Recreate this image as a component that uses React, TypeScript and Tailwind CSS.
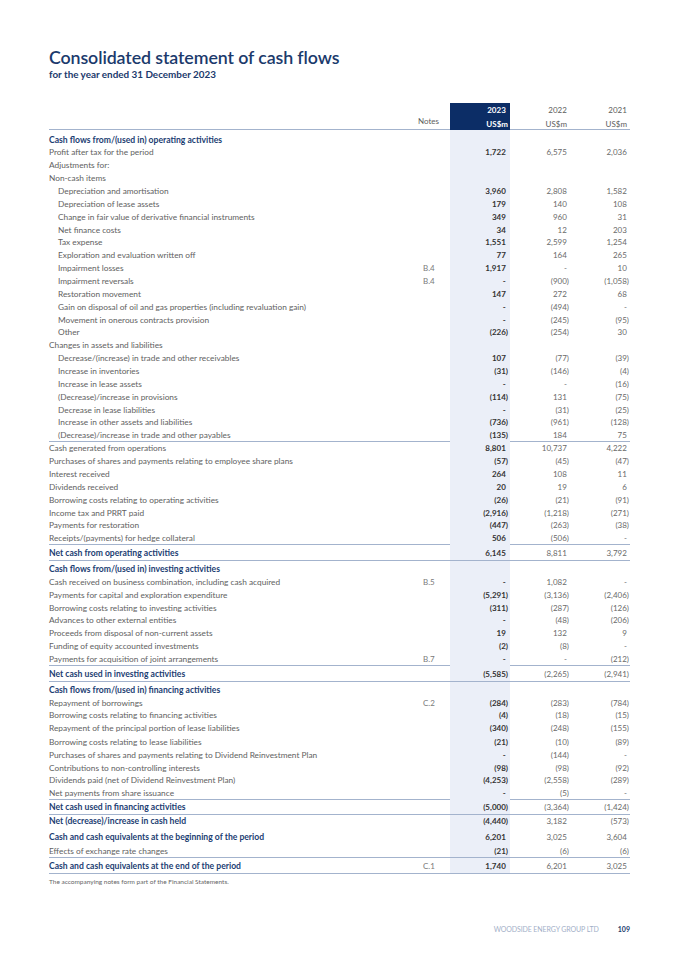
import React from 'react';

type Row = {
  label: string;
  kind?: 'head' | 'item' | 'total';
  indent?: boolean;
  note?: string;
  v?: [string, string, string];
  line?: boolean;
  h?: string;
};

const rows: Row[] = [
  { label: 'Cash flows from/(used in) operating activities', kind: 'head', h: 'h-[16.44px]' },
  { label: 'Profit after tax for the period', v: ['1,722', '6,575', '2,036'] },
  { label: 'Adjustments for:' },
  { label: 'Non-cash items' },
  { label: 'Depreciation and amortisation', indent: true, v: ['3,960', '2,808', '1,582'] },
  { label: 'Depreciation of lease assets', indent: true, v: ['179', '140', '108'] },
  { label: 'Change in fair value of derivative financial instruments', indent: true, v: ['349', '960', '31'] },
  { label: 'Net finance costs', indent: true, v: ['34', '12', '203'] },
  { label: 'Tax expense', indent: true, v: ['1,551', '2,599', '1,254'] },
  { label: 'Exploration and evaluation written off', indent: true, v: ['77', '164', '265'] },
  { label: 'Impairment losses', indent: true, note: 'B.4', v: ['1,917', '-', '10'] },
  { label: 'Impairment reversals', indent: true, note: 'B.4', v: ['-', '(900)', '(1,058)'] },
  { label: 'Restoration movement', indent: true, v: ['147', '272', '68'] },
  { label: 'Gain on disposal of oil and gas properties (including revaluation gain)', indent: true, v: ['-', '(494)', '-'] },
  { label: 'Movement in onerous contracts provision', indent: true, v: ['-', '(245)', '(95)'] },
  { label: 'Other', indent: true, v: ['(226)', '(254)', '30'] },
  { label: 'Changes in assets and liabilities' },
  { label: 'Decrease/(increase) in trade and other receivables', indent: true, v: ['107', '(77)', '(39)'] },
  { label: 'Increase in inventories', indent: true, v: ['(31)', '(146)', '(4)'] },
  { label: 'Increase in lease assets', indent: true, v: ['-', '-', '(16)'] },
  { label: '(Decrease)/increase in provisions', indent: true, v: ['(114)', '131', '(75)'] },
  { label: 'Decrease in lease liabilities', indent: true, v: ['-', '(31)', '(25)'] },
  { label: 'Increase in other assets and liabilities', indent: true, v: ['(736)', '(961)', '(128)'] },
  { label: '(Decrease)/increase in trade and other payables', indent: true, v: ['(135)', '184', '75'], line: true },
  { label: 'Cash generated from operations', v: ['8,801', '10,737', '4,222'] },
  { label: 'Purchases of shares and payments relating to employee share plans', v: ['(57)', '(45)', '(47)'] },
  { label: 'Interest received', v: ['264', '108', '11'] },
  { label: 'Dividends received', v: ['20', '19', '6'] },
  { label: 'Borrowing costs relating to operating activities', v: ['(26)', '(21)', '(91)'] },
  { label: 'Income tax and PRRT paid', v: ['(2,916)', '(1,218)', '(271)'] },
  { label: 'Payments for restoration', v: ['(447)', '(263)', '(38)'] },
  { label: 'Receipts/(payments) for hedge collateral', v: ['506', '(506)', '-'], line: true },
  { label: 'Net cash from operating activities', kind: 'total', v: ['6,145', '8,811', '3,792'], line: true, h: 'h-[15.87px]' },
  { label: 'Cash flows from/(used in) investing activities', kind: 'head', h: 'h-[14.87px]' },
  { label: 'Cash received on business combination, including cash acquired', note: 'B.5', v: ['-', '1,082', '-'] },
  { label: 'Payments for capital and exploration expenditure', v: ['(5,291)', '(3,136)', '(2,406)'] },
  { label: 'Borrowing costs relating to investing activities', v: ['(311)', '(287)', '(126)'] },
  { label: 'Advances to other external entities', v: ['-', '(48)', '(206)'] },
  { label: 'Proceeds from disposal of non-current assets', v: ['19', '132', '9'] },
  { label: 'Funding of equity accounted investments', v: ['(2)', '(8)', '-'] },
  { label: 'Payments for acquisition of joint arrangements', note: 'B.7', v: ['-', '-', '(212)'], line: true },
  { label: 'Net cash used in investing activities', kind: 'total', v: ['(5,585)', '(2,265)', '(2,941)'], line: true, h: 'h-[15.87px]' },
  { label: 'Cash flows from/(used in) financing activities', kind: 'head', h: 'h-[14.87px]' },
  { label: 'Repayment of borrowings', note: 'C.2', v: ['(284)', '(283)', '(784)'] },
  { label: 'Borrowing costs relating to financing activities', v: ['(4)', '(18)', '(15)'] },
  { label: 'Repayment of the principal portion of lease liabilities', v: ['(340)', '(248)', '(155)'] },
  { label: 'Borrowing costs relating to lease liabilities', v: ['(21)', '(10)', '(89)'], h: 'h-[13.87px]' },
  { label: 'Purchases of shares and payments relating to Dividend Reinvestment Plan', v: ['-', '(144)', '-'], h: 'h-[12.75px]' },
  { label: 'Contributions to non-controlling interests', v: ['(98)', '(98)', '(92)'], h: 'h-[12.75px]' },
  { label: 'Dividends paid (net of Dividend Reinvestment Plan)', v: ['(4,253)', '(2,558)', '(289)'], h: 'h-[12.75px]' },
  { label: 'Net payments from share issuance', v: ['-', '(5)', '-'], line: true, h: 'h-[12.75px]' },
  { label: 'Net cash used in financing activities', kind: 'total', v: ['(5,000)', '(3,364)', '(1,424)'], line: true, h: 'h-[14.87px]' },
  { label: 'Net (decrease)/increase in cash held', kind: 'total', v: ['(4,440)', '3,182', '(573)'] },
  { label: 'Cash and cash equivalents at the beginning of the period', kind: 'total', v: ['6,201', '3,025', '3,604'], h: 'h-[15.87px]' },
  { label: 'Effects of exchange rate changes', v: ['(21)', '(6)', '(6)'], line: true, h: 'h-[14.87px]' },
  { label: 'Cash and cash equivalents at the end of the period', kind: 'total', note: 'C.1', v: ['1,740', '6,201', '3,025'], line: true, h: 'h-[15.87px]' },
];

// numbers without brackets keep a hidden ")" so the digits line up
function Num({ value }: { value: string }) {
  if (value.startsWith('(')) return <span>{value}</span>;
  return (
    <span>
      {value}
      <span className="invisible">)</span>
    </span>
  );
}

function StatementRow({ row }: { row: Row }) {
  const isBlue = row.kind === 'head' || row.kind === 'total';
  return (
    <div
      className={`grid grid-cols-[351px_50px_60px_60px_60px] ${row.h ?? 'h-[12.87px]'} ${
        row.line ? 'border-b border-[#a3b3cd]' : ''
      }`}
    >
      <div
        className={`flex items-end leading-[12.87px] whitespace-nowrap ${row.indent ? 'pl-[9px]' : ''} ${
          isBlue ? 'font-bold text-[#1b3d72] text-[8.6px]' : 'font-normal text-[#616161] text-[8.3px]'
        }`}
      >
        {row.label}
      </div>
      <div className="flex items-end pl-[23px] leading-[12.87px] font-normal text-[#7a7a7a]">{row.note ?? ''}</div>
      <div className="flex items-end justify-end pr-[2px] bg-[#ebeff8] leading-[12.87px] font-bold text-[#333333]">
        {row.v && <Num value={row.v[0]} />}
      </div>
      <div className="flex items-end justify-end pr-[1px] leading-[12.87px] font-normal text-[#6a6a6a]">
        {row.v && <Num value={row.v[1]} />}
      </div>
      <div className="flex items-end justify-end pr-[1px] leading-[12.87px] font-normal text-[#6a6a6a]">
        {row.v && <Num value={row.v[2]} />}
      </div>
    </div>
  );
}

export default function App() {
  return (
    <div className="w-[679px] h-[960px] bg-white px-[49px] font-['Lato',sans-serif] flex flex-col">
      <h1 className="mt-[46px] text-[17.8px] leading-[22px] font-semibold text-[#1b3a6c] tracking-[-0.1px]">
        Consolidated statement of cash flows
      </h1>
      <p className="text-[9.9px] leading-[12px] font-bold text-[#1b3a6c]">for the year ended 31 December 2023</p>

      <div className="mt-[23px] w-[581px] text-[8px]">
        <div className="grid grid-cols-[351px_50px_60px_60px_60px] h-[27px] border-b border-[#a3b3cd]">
          <div />
          <div className="flex items-end justify-end pr-[11px] pb-[4px] font-normal text-[#5c5c5c]">Notes</div>
          <div className="flex flex-col items-end justify-center pr-[2px] bg-[#0c2d66] font-bold text-white leading-[14px]">
            <Num value="2023" />
            <span>US$m</span>
          </div>
          <div className="flex flex-col items-end justify-center pr-[1px] font-normal text-[#5c5c5c] leading-[14px]">
            <Num value="2022" />
            <Num value="US$m" />
          </div>
          <div className="flex flex-col items-end justify-center pr-[1px] font-normal text-[#5c5c5c] leading-[14px]">
            <Num value="2021" />
            <Num value="US$m" />
          </div>
        </div>
        {rows.map((row, i) => (
          <StatementRow key={i} row={row} />
        ))}
      </div>

      <p className="mt-[3px] text-[6.5px] leading-[9px] font-normal text-[#666666]">
        The accompanying notes form part of the Financial Statements.
      </p>

      <div className="mt-auto mb-[26px] w-[581px] flex justify-end items-center gap-[19px] text-[7px]">
        <span className="font-normal text-[#a3afc8] tracking-[-0.1px]">WOODSIDE ENERGY GROUP LTD</span>
        <span className="font-bold text-[#1b3a6c]">109</span>
      </div>
    </div>
  );
}
